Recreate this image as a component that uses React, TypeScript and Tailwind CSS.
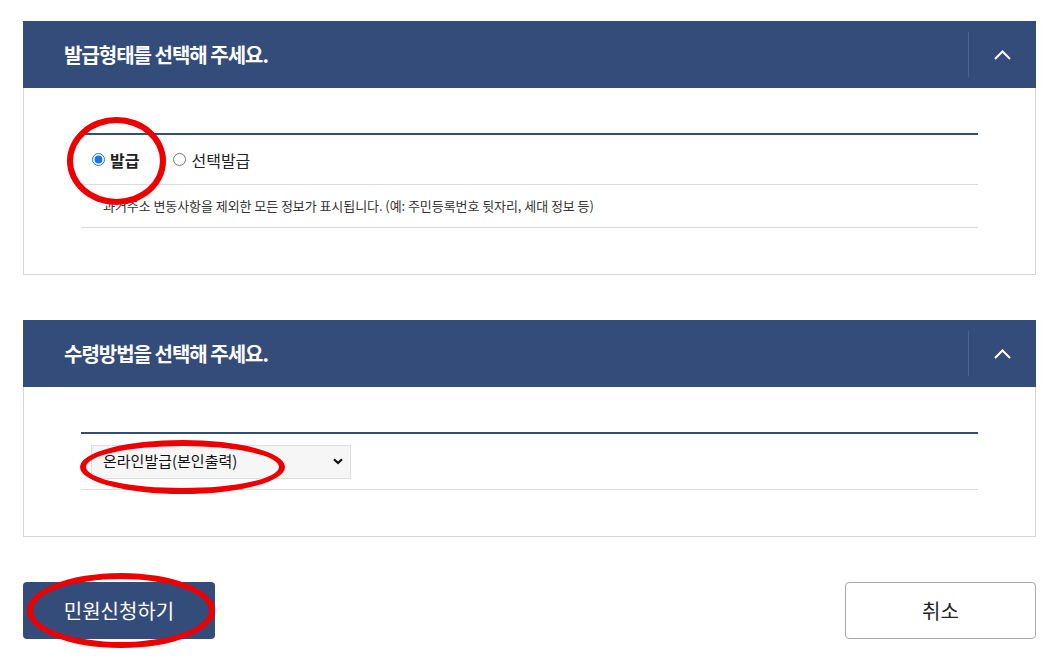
import { useState } from 'react';

const FONT = { fontFamily: '"Noto Sans CJK KR", "Noto Sans", sans-serif' };

function PanelHeader({ title }: { title: string }) {
  return (
    <div className="flex h-[67px] items-center bg-[#344c79]">
      <h2 className="pl-[41px] text-[20px] font-bold tracking-[-0.05em] text-white">{title}</h2>
      <div className="ml-auto h-[45px] border-l border-[#4c6291]" />
      <button className="flex h-full w-[67px] items-center justify-center">
        <svg width="17" height="10" viewBox="0 0 17 10" fill="none">
          <path d="M1 9 L8.5 1.5 L16 9" stroke="white" strokeWidth="2" />
        </svg>
      </button>
    </div>
  );
}

function Ellipse({ className }: { className: string }) {
  return <div className={`pointer-events-none absolute rounded-[50%] border-[6px] border-[#ee0000] ${className}`} />;
}

export default function App() {
  const [type, setType] = useState('all');

  return (
    <div className="relative min-h-[660px] bg-white px-[23px] pt-[21px] text-[#222]" style={FONT}>
      <section>
        <PanelHeader title="발급형태를 선택해 주세요." />
        <div className="border border-t-0 border-[#d6d6d6] px-[57px] pb-[46px] pt-[45px]">
          <div className="border-t-2 border-[#344c79]">
            <div className="flex h-[50px] items-center border-b border-[#dcdcdc] pl-[11px] text-[16px]">
              <label className="flex items-center gap-[5px] font-bold">
                <input
                  type="radio"
                  name="type"
                  checked={type === 'all'}
                  onChange={() => setType('all')}
                  className="m-0 h-[13px] w-[13px] accent-[#1a73e8]"
                />
                발급
              </label>
              <label className="ml-[34px] flex items-center gap-[5px]">
                <input
                  type="radio"
                  name="type"
                  checked={type === 'pick'}
                  onChange={() => setType('pick')}
                  className="m-0 h-[13px] w-[13px]"
                />
                선택발급
              </label>
            </div>
            <div className="flex h-[43px] items-center border-b border-[#dcdcdc] pl-[22px] text-[13px] tracking-[-0.005em] text-[#333]">
              과거주소 변동사항을 제외한 모든 정보가 표시됩니다. (예: 주민등록번호 뒷자리, 세대 정보 등)
            </div>
          </div>
        </div>
      </section>

      <section className="mt-[45px]">
        <PanelHeader title="수령방법을 선택해 주세요." />
        <div className="border border-t-0 border-[#d6d6d6] px-[57px] pb-[46px] pt-[45px]">
          <div className="border-t-2 border-[#344c79]">
            <div className="flex h-[56px] items-center border-b border-[#dcdcdc] pl-[10px]">
              <div className="relative h-[34px] w-[260px]">
                <select className="h-full w-full appearance-none border border-[#dedede] bg-[#f6f6f6] pl-[11px] text-[15px] text-[#111] outline-none">
                  <option>온라인발급(본인출력)</option>
                </select>
                <svg
                  className="pointer-events-none absolute right-[8px] top-[13px]"
                  width="10"
                  height="7"
                  viewBox="0 0 10 7"
                  fill="none"
                >
                  <path d="M1 1.2 L5 5 L9 1.2" stroke="#111" strokeWidth="2.2" />
                </svg>
              </div>
            </div>
          </div>
        </div>
      </section>

      <div className="mt-[45px] flex justify-between">
        <button className="h-[57px] w-[192px] rounded-[4px] bg-[#344c79] text-[20px] text-white">민원신청하기</button>
        <button className="h-[57px] w-[191px] rounded-[4px] border border-[#aaaaaa] bg-white text-[20px] text-[#222]">
          취소
        </button>
      </div>

      <Ellipse className="left-[67px] top-[117px] h-[88px] w-[99px]" />
      <Ellipse className="left-[80px] top-[440px] h-[54px] w-[205px]" />
      <Ellipse className="left-[27px] top-[573px] h-[75px] w-[188px]" />
    </div>
  );
}
